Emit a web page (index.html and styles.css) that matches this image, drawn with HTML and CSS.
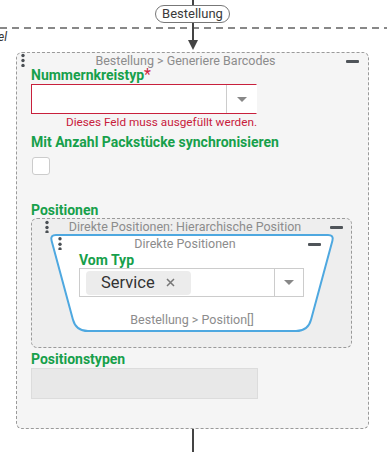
FILE: index.html
```html
<!DOCTYPE html>
<html lang="de">
<head>
    <meta charset="UTF-8">
    <title>Bestellung</title>
    <link rel="stylesheet" href="styles.css">
</head>
<body>
    <div class="canvas">
        <div class="lane"></div>
        <span class="lane-label">el</span>

        <div class="flow">
            <div class="wire wire-top"></div>
            <div class="pill">Bestellung</div>
            <div class="wire wire-mid"></div>
            <div class="arrow"></div>

            <div class="node">
                <div class="node-head head-main">
                    <svg class="dots" width="4" height="14" viewBox="0 0 4 14"><circle cx="2" cy="2.5" r="1.7"/><circle cx="2" cy="7.5" r="1.7"/><circle cx="2" cy="12.5" r="1.7"/></svg>
                    <span class="node-title">Bestellung &gt; Generiere Barcodes</span>
                    <span class="minus"></span>
                </div>

                <div class="field-label">Nummernkreistyp<span class="req">*</span></div>
                <div class="select invalid">
                    <div class="select-value"></div>
                    <div class="select-toggle"><span class="caret"></span></div>
                </div>
                <div class="error">Dieses Feld muss ausgefüllt werden.</div>

                <div class="field-label sync-label">Mit Anzahl Packstücke synchronisieren</div>
                <div class="checkbox"></div>

                <div class="field-label pos-label">Positionen</div>
                <div class="group">
                    <div class="node-head head-group">
                        <svg class="dots" width="4" height="14" viewBox="0 0 4 14"><circle cx="2" cy="3.5" r="1.7"/><circle cx="2" cy="8.5" r="1.7"/><circle cx="2" cy="13" r="1.7"/></svg>
                        <span class="node-title">Direkte Positionen: Hierarchische Position</span>
                        <span class="minus"></span>
                    </div>

                    <div class="trap">
                        <svg class="trap-shape" width="286" height="98" viewBox="0 0 286 98">
                            <path d="M7,1 L279,1 Q285,1 283.4,6.8 L262.1,85.4 Q259,97 247,97 L39,97 Q27,97 23.9,85.4 L2.6,6.8 Q1,1 7,1 Z"/>
                        </svg>
                        <div class="trap-body">
                            <div class="node-head head-trap">
                                <svg class="dots" width="4" height="14" viewBox="0 0 4 14"><circle cx="2" cy="2.7" r="1.7"/><circle cx="2" cy="8.2" r="1.7"/><circle cx="2" cy="13" r="1.7"/></svg>
                                <span class="node-title">Direkte Positionen</span>
                                <span class="minus"></span>
                            </div>
                            <div class="field-label">Vom Typ</div>
                            <div class="select small">
                                <div class="select-value">
                                    <span class="chip">Service
                                        <svg class="chip-x" width="9" height="9" viewBox="0 0 9 9"><path d="M1,1 L8,8 M8,1 L1,8"/></svg>
                                    </span>
                                </div>
                                <div class="select-toggle"><span class="caret"></span></div>
                            </div>
                            <div class="trap-foot">Bestellung &gt; Position[]</div>
                        </div>
                    </div>
                </div>

                <div class="field-label types-label">Positionstypen</div>
                <div class="disabled-field"></div>
            </div>

            <div class="wire wire-bottom"></div>
        </div>
    </div>
</body>
</html>
```

FILE: styles.css
```css
body {
    margin: 0;
    background-color: #fff;
    font-family: Roboto, "Liberation Sans", Arial, sans-serif;
}

.canvas {
    position: relative;
    width: 387px;
    height: 452px;
    overflow: hidden;
}

/* swimlane */
.lane {
    position: absolute;
    top: 27px;
    left: 0;
    right: 0;
    height: 2px;
    background: repeating-linear-gradient(to right, #888 0 7px, transparent 7px 12px);
}

.lane-label {
    position: absolute;
    top: 30px;
    left: -2px;
    font-size: 12px;
    font-style: italic;
    color: #333;
}

.flow {
    position: relative;
    width: 385px;
    display: flex;
    flex-direction: column;
    align-items: center;
}

.wire {
    width: 2px;
    background-color: #444;
}

.wire-top {
    height: 5px;
}

.wire-mid {
    height: 17px;
}

.wire-bottom {
    height: 30px;
}

.pill {
    box-sizing: border-box;
    height: 18px;
    padding: 0 6px;
    border: 1px solid #777;
    border-radius: 9px;
    font-size: 13px;
    line-height: 16px;
    color: #3a3a3a;
    background-color: #fff;
}

.arrow {
    width: 0;
    height: 0;
    border-left: 5px solid transparent;
    border-right: 5px solid transparent;
    border-top: 10px solid #444;
    margin-bottom: 2px;
}

/* node boxes */
.node {
    box-sizing: border-box;
    width: 353px;
    border: 1px dashed #9a9a9a;
    border-radius: 6px;
    background-color: #f5f5f5;
    padding: 0 0 29px 14px;
}

.node-head {
    display: flex;
    align-items: center;
    height: 14px;
}

.head-main {
    margin-left: -14px;
    padding: 0 9px 0 4px;
}

.head-group {
    padding: 0 8px 0 13px;
}

.head-group .node-title {
    margin-right: 9px;
}

.head-trap {
    padding: 0 14px 0 9px;
}

.dots {
    flex: none;
    fill: #4a4f54;
}

.node-title {
    flex: 1;
    text-align: center;
    font-size: 12.5px;
    line-height: 13px;
    color: #8c8c8c;
    white-space: nowrap;
}

.minus {
    flex: none;
    width: 13px;
    height: 3px;
    margin-top: 2px;
    border-radius: 1px;
    background-color: #4f5459;
}

.field-label {
    font-size: 14px;
    font-weight: bold;
    line-height: 15px;
    color: #17a04b;
    white-space: nowrap;
}

.req {
    color: #d0243f;
    font-weight: normal;
    font-size: 16px;
}

.select {
    box-sizing: border-box;
    display: flex;
    width: 226px;
    height: 30px;
    margin-top: 1px;
    border: 1px solid #ccc;
    background-color: #fff;
}

.select.invalid {
    border-color: #c8203c;
    border-right-color: transparent;
}

.select-value {
    flex: 1;
    display: flex;
    align-items: center;
}

.select-toggle {
    width: 29px;
    display: flex;
    align-items: center;
    justify-content: center;
    border-left: 1px solid #ccc;
}

.caret {
    width: 0;
    height: 0;
    border-left: 5px solid transparent;
    border-right: 5px solid transparent;
    border-top: 5px solid #888;
}

.error {
    width: 226px;
    margin-top: 2px;
    text-align: right;
    font-size: 11.75px;
    line-height: 13px;
    color: #c8203c;
    white-space: nowrap;
}

.sync-label {
    margin-top: 6px;
}

.checkbox {
    box-sizing: border-box;
    width: 18px;
    height: 18px;
    margin: 7px 0 0 1px;
    border: 1px solid #ccc;
    border-radius: 3px;
    background-color: #fff;
}

.pos-label {
    margin-top: 28px;
}

.group {
    box-sizing: border-box;
    width: 321px;
    border: 1px dashed #9a9a9a;
    border-radius: 6px;
    background-color: #eee;
    padding-bottom: 15px;
}

/* trapezoid node */
.trap {
    position: relative;
    width: 286px;
    height: 98px;
    margin: 1px 0 0 17px;
}

.trap-shape {
    position: absolute;
    top: 0;
    left: 0;
}

.trap-shape path {
    fill: #fff;
    stroke: #4ea8e0;
    stroke-width: 2;
}

.trap-body {
    position: relative;
    padding-top: 2px;
}

.trap-body .field-label {
    margin: 3px 0 0 30px;
}

.select.small {
    width: 225px;
    height: 29px;
    margin: 0 0 0 30px;
}

.select.small .select-toggle {
    width: 28px;
}

.chip {
    display: flex;
    align-items: center;
    height: 24px;
    margin-left: 6px;
    padding: 0 16px 0 15px;
    border-radius: 4px;
    background-color: #ececec;
    font-size: 16.5px;
    color: #333;
}

.chip-x {
    margin-left: 11px;
    stroke: #777;
    stroke-width: 1.5;
}

.trap-foot {
    margin-top: 16px;
    text-align: center;
    font-size: 12.5px;
    line-height: 14px;
    color: #8c8c8c;
}

.types-label {
    margin-top: 4px;
}

.disabled-field {
    box-sizing: border-box;
    width: 227px;
    height: 31px;
    margin-top: 1px;
    border: 1px solid #dcdcdc;
    background-color: #e8e8e8;
}
```
